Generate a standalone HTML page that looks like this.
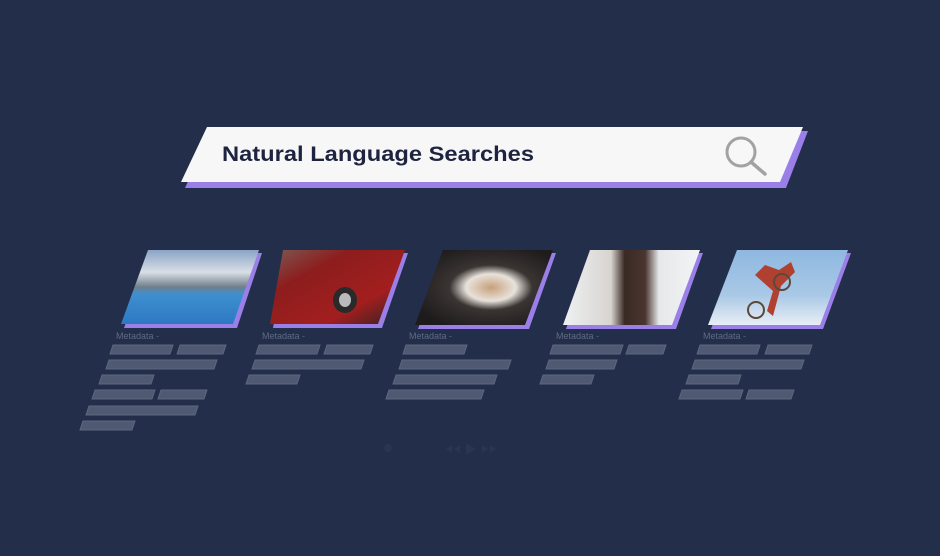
<!DOCTYPE html>
<html><head><meta charset="utf-8"><style>
html,body{margin:0;padding:0;background:#232e4a;width:940px;height:556px;overflow:hidden}
svg{display:block}
.m{font-family:"Liberation Sans",sans-serif;font-size:9px;fill:#5f6a82}
</style></head><body>
<svg width="940" height="556" viewBox="0 0 940 556" xmlns="http://www.w3.org/2000/svg">
<defs>
<linearGradient id="g1" x1="0" y1="0" x2="0" y2="1"><stop offset="0" stop-color="#8aa4c6"/><stop offset="0.3" stop-color="#d9dfe6"/><stop offset="0.5" stop-color="#6f7f8c"/><stop offset="0.6" stop-color="#3f8fcf"/><stop offset="1" stop-color="#2d78c4"/></linearGradient>
<linearGradient id="g2" x1="0" y1="0" x2="1" y2="1"><stop offset="0" stop-color="#7a5a55"/><stop offset="0.3" stop-color="#8d1d1d"/><stop offset="0.7" stop-color="#a31e1e"/><stop offset="1" stop-color="#2a2224"/></linearGradient>
<radialGradient id="g3" cx="0.55" cy="0.5" r="0.6"><stop offset="0" stop-color="#c8a07a"/><stop offset="0.3" stop-color="#e8e2dc"/><stop offset="0.5" stop-color="#3a3432"/><stop offset="1" stop-color="#1e1b1c"/></radialGradient>
<linearGradient id="g4" x1="0" y1="0" x2="1" y2="0"><stop offset="0" stop-color="#eef1f3"/><stop offset="0.35" stop-color="#d8d4d0"/><stop offset="0.45" stop-color="#3a2a24"/><stop offset="0.6" stop-color="#4a3430"/><stop offset="0.7" stop-color="#e6e8ea"/><stop offset="1" stop-color="#f2f4f6"/></linearGradient>
<linearGradient id="g5" x1="0" y1="0" x2="0" y2="1"><stop offset="0" stop-color="#8fb8e0"/><stop offset="0.6" stop-color="#a9c8e6"/><stop offset="1" stop-color="#e8eef5"/></linearGradient>
</defs>
<rect width="940" height="556" fill="#232e4a"/>
<polygon points="211,131 808,131 786,188 185,188" fill="#9b7fe8"/>
<polygon points="207,127 803,127 780,182 181,182" fill="#f7f7f7"/>
<text x="222" y="161" font-family="Liberation Sans, sans-serif" font-weight="bold" font-size="21" fill="#1e2440" textLength="312" lengthAdjust="spacingAndGlyphs">Natural Language Searches</text>
<circle cx="741" cy="152" r="14" fill="none" stroke="#a2a2a2" stroke-width="3"/>
<line x1="751" y1="162" x2="765" y2="174" stroke="#a2a2a2" stroke-width="3.5" stroke-linecap="round"/>
<g>
<polygon points="151,253 262,253 237,328 124,328" fill="#9b7fe8"/>
<polygon points="148,250 259,250 233,324 121,324" fill="url(#g1)"/>
<polygon points="286,253 408,253 382,328 273,328" fill="#9b7fe8"/>
<polygon points="283,250 405,250 378,324 270,324" fill="url(#g2)"/>
<ellipse cx="345" cy="300" rx="12" ry="13" fill="#2a2a2a"/><ellipse cx="345" cy="300" rx="6" ry="7" fill="#bbb"/>
<polygon points="446,253 556,253 529,329 418,329" fill="#9b7fe8"/>
<polygon points="443,250 553,250 525,325 415,325" fill="url(#g3)"/>
<polygon points="593,253 703,253 676,329 566,329" fill="#9b7fe8"/>
<polygon points="590,250 700,250 672,325 563,325" fill="url(#g4)"/>
<polygon points="740,253 851,253 823,329 711,329" fill="#9b7fe8"/>
<polygon points="737,250 848,250 820,325 708,325" fill="url(#g5)"/>
<path d="M755 275 l10 -10 l14 5 l12 -8 l4 10 l-14 14 l-8 30 l-6 -5 l6 -20 z" fill="#b04030"/>
<circle cx="782" cy="282" r="8" fill="none" stroke="#5a4a3a" stroke-width="2"/>
<circle cx="756" cy="310" r="8" fill="none" stroke="#5a4a3a" stroke-width="2"/>
</g>
<g fill="#4f5a72">
<text class="m" x="116" y="339">Metadata -</text>
<text class="m" x="262" y="339">Metadata -</text>
<text class="m" x="409" y="339">Metadata -</text>
<text class="m" x="556" y="339">Metadata -</text>
<text class="m" x="703" y="339">Metadata -</text>
<g stroke="#5b6680" stroke-width="1">
<polygon points="113,345 173,345 170,354 110,354"/><polygon points="180,345 226,345 223,354 177,354"/>
<polygon points="109,360 217,360 214,369 106,369"/>
<polygon points="102,375 154,375 151,384 99,384"/>
<polygon points="95,390 155,390 152,399 92,399"/><polygon points="161,390 207,390 204,399 158,399"/>
<polygon points="89,406 198,406 195,415 86,415"/>
<polygon points="83,421 135,421 132,430 80,430"/>
<polygon points="259,345 320,345 317,354 256,354"/><polygon points="327,345 373,345 370,354 324,354"/>
<polygon points="255,360 364,360 361,369 252,369"/>
<polygon points="249,375 300,375 297,384 246,384"/>
<polygon points="406,345 467,345 464,354 403,354"/>
<polygon points="402,360 511,360 508,369 399,369"/>
<polygon points="396,375 497,375 494,384 393,384"/>
<polygon points="389,390 484,390 481,399 386,399"/>
<polygon points="553,345 623,345 620,354 550,354"/><polygon points="629,345 666,345 663,354 626,354"/>
<polygon points="549,360 617,360 614,369 546,369"/>
<polygon points="543,375 594,375 591,384 540,384"/>
<polygon points="700,345 760,345 757,354 697,354"/><polygon points="768,345 812,345 809,354 765,354"/>
<polygon points="695,360 804,360 801,369 692,369"/>
<polygon points="689,375 741,375 738,384 686,384"/>
<polygon points="682,390 743,390 740,399 679,399"/><polygon points="749,390 794,390 791,399 746,399"/>
</g>
</g>
<g fill="#2a3551">
<polygon points="466,443 466,455 476,449"/>
<polygon points="460,445 454,449 460,453"/><polygon points="452,445 446,449 452,453"/>
<polygon points="482,445 488,449 482,453"/><polygon points="490,445 496,449 490,453"/>
<circle cx="388" cy="448" r="4"/>
</g>
</svg>
</body></html>
